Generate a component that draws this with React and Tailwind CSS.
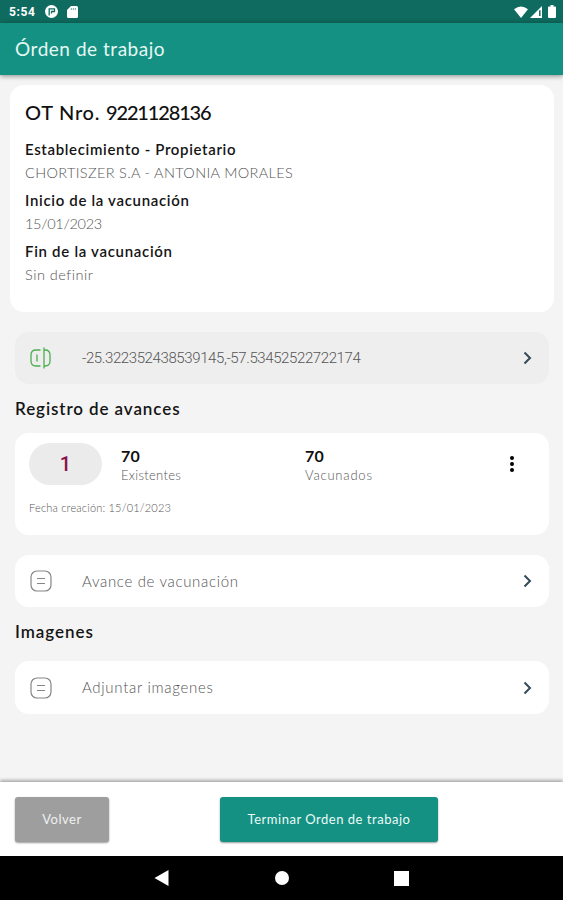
const details = [
  { label: 'Establecimiento - Propietario', value: 'CHORTISZER S.A - ANTONIA MORALES', labelCls: 'tracking-[0.65px]', valueCls: 'tracking-[0.34px]' },
  { label: 'Inicio de la vacunación', value: '15/01/2023', labelCls: 'tracking-[0.68px]', valueCls: 'tracking-[-0.3px]' },
  { label: 'Fin de la vacunación', value: 'Sin definir', labelCls: 'tracking-[0.7px]', valueCls: 'tracking-[0.5px]' },
]

function StatusBar() {
  return (
    <div className="flex h-[23px] shrink-0 items-center bg-[#0f6b5f] pl-[9px] pr-[7px] text-white">
      <span className="w-9 font-[Roboto] text-[12px] font-bold leading-none tracking-[0.6px]">5:54</span>
      <svg className="h-[13px] w-[13px]" viewBox="0 0 13 13">
        <circle cx="6.5" cy="6.5" r="6.5" fill="currentColor" />
        <path d="M4.200 10.500V3.800h5.300v2.700H6.500v2" fill="none" stroke="#0f6b5f" strokeWidth="1.300" />
      </svg>
      <svg className="ml-[9px] h-3 w-[11px]" viewBox="0 0 11 12">
        <path d="M4 0h5.5Q11 0 11 1.5v9Q11 12 9.500 12h-8Q0 12 0 10.500V4z" fill="currentColor" />
        <path d="M4.300 2v2M6.300 2v2M8.300 2v2" stroke="#0f6b5f" strokeWidth="0.600" />
      </svg>
      <div className="flex-1" />
      <svg className="h-3 w-[14px]" viewBox="0 0 14 12">
        <path d="M0 3.300Q7-2.500 14 3.300L7 12z" fill="currentColor" />
      </svg>
      <svg className="ml-[2px] h-3 w-3" viewBox="0 0 12 12">
        <path d="M0 12L12 0v12z" fill="currentColor" />
        <path d="M9.800 4.300V10" stroke="#0f6b5f" strokeWidth="1.500" />
      </svg>
      <svg className="ml-[6px] h-[13px] w-[8px]" viewBox="0 0 8 13">
        <path d="M2.500 0h3v1.500H7q1 0 1 1V12q0 1-1 1H1q-1 0-1-1V2.500q0-1 1-1h1.500z" fill="currentColor" />
      </svg>
    </div>
  )
}

function Chevron() {
  return (
    <svg className="h-[14px] w-[9px]" viewBox="0 0 9 14">
      <path d="M1.500 1.500L7 7l-5.500 5.500" fill="none" stroke="#344b57" strokeWidth="2" />
    </svg>
  )
}

function NoteIcon() {
  return (
    <svg className="h-[22px] w-[22px]" viewBox="0 0 22 22" fill="none" stroke="#858585" strokeWidth="1.200" strokeLinecap="round">
      <rect x="1" y="1" width="20" height="20" rx="6" />
      <path d="M7.500 8.500h7M7.500 13.500h7" />
    </svg>
  )
}

function LocationIcon() {
  return (
    <svg className="h-[22px] w-[22px]" viewBox="0 0 22 22" fill="none" stroke="#4caf50" strokeWidth="1.300" strokeLinecap="round">
      <path d="M10 3H6Q1 3 1 8v6q0 5 5 5h4M14 1v20M14 3h1q5 0 5 5v6q0 5-5 5h-1M7 8v6" />
    </svg>
  )
}

function ActionRow({ icon, className, textCls, children }) {
  return (
    <div className={`flex w-[534px] shrink-0 items-center rounded-[14px] pl-[15px] pr-[17px] ${className}`}>
      {icon}
      <span className={`ml-[30px] flex-1 text-[15px] text-[#555] ${textCls}`}>{children}</span>
      <Chevron />
    </div>
  )
}

function Count({ value, label, className, labelCls }) {
  return (
    <div className={className}>
      <div className="pt-[2px] text-[16px] font-bold leading-[20px] tracking-[0.3px] text-[#111]">{value}</div>
      <div className={`text-[13px] font-light leading-[18px] text-[#555] ${labelCls}`}>{label}</div>
    </div>
  )
}

export default function App() {
  return (
    <div className="flex h-[900px] w-[563px] flex-col overflow-hidden bg-[#f4f4f4] font-['Lato','Open_Sans',sans-serif]">
      <StatusBar />
      <header className="z-10 flex h-[52px] shrink-0 items-center bg-[#149182] pl-[15px] text-[19px] tracking-[0.53px] text-[#e6f7f4] shadow-[0_1px_5px_rgba(0,0,0,0.45)]">
        Órden de trabajo
      </header>

      <main className="flex min-h-0 flex-1 flex-col px-[15px] pt-[10px]">
        <section className="-ml-[5px] -mr-[5px] h-[227px] w-[544px] shrink-0 rounded-[14px] bg-white px-[15px] pt-[14px]">
          <h1 className="mb-[12px] text-[20px] font-medium leading-[26px] tracking-[0.75px] text-[#111]">
            OT Nro. <span className="tracking-[-1.15px]">9221128136</span>
          </h1>
          <div className="flex flex-col gap-[4px]">
            {details.map(d => (
              <div key={d.label}>
                <div className={`w-fit text-[15px] font-semibold leading-[24px] text-[#151515] ${d.labelCls}`}>{d.label}</div>
                <div className={`w-fit text-[14.5px] font-light leading-[23px] text-[#555] ${d.valueCls}`}>{d.value}</div>
              </div>
            ))}
          </div>
        </section>

        <ActionRow icon={<LocationIcon />} className="mt-[20px] h-[52px] bg-[#eeeeee]" textCls="font-[Roboto] font-light tracking-[-0.39px]">
          -25.322352438539145,-57.53452522722174
        </ActionRow>

        <h2 className="mt-[12px] text-[17px] font-semibold leading-[25px] tracking-[0.9px] text-[#151515]">Registro de avances</h2>

        <section className="mt-[12px] h-[102px] w-[534px] shrink-0 rounded-[14px] bg-white px-[14px] pt-[10px]">
          <div className="flex h-[42px] items-center">
            <div className="flex h-[42px] w-[73px] items-center justify-center rounded-full bg-[#ebebeb] font-[Roboto] text-[20px] font-medium text-[#8b1048]">1</div>
            <Count value="70" label="Existentes" className="ml-[19px] w-[184px]" labelCls="tracking-[0.3px]" />
            <Count value="70" label="Vacunados" className="flex-1" labelCls="tracking-[0.8px]" />
            <div className="mr-[21px] flex flex-col gap-[2px]">
              <span className="h-[4px] w-[4px] rounded-full bg-black" />
              <span className="h-[4px] w-[4px] rounded-full bg-black" />
              <span className="h-[4px] w-[4px] rounded-full bg-black" />
            </div>
          </div>
          <div className="mt-[15px] text-[11px] font-light leading-[16px] tracking-[0.2px] text-[#555]">Fecha creación: 15/01/2023</div>
        </section>

        <ActionRow icon={<NoteIcon />} className="mt-[20px] h-[52px] bg-white" textCls="font-light tracking-[0.67px]">Avance de vacunación</ActionRow>

        <h2 className="mt-[12px] text-[17px] font-semibold leading-[25px] tracking-[0.95px] text-[#151515]">Imagenes</h2>

        <ActionRow icon={<NoteIcon />} className="mt-[17px] h-[53px] bg-white" textCls="font-light tracking-[0.7px]">Adjuntar imagenes</ActionRow>
      </main>

      <footer className="z-10 flex h-[74px] shrink-0 items-start bg-white pl-[15px] pt-[15px] shadow-[0_-2px_3px_rgba(0,0,0,0.3)]">
        <button className="h-[45px] w-[94px] rounded-[3px] bg-[#9e9e9e] text-[13px] tracking-[0.5px] text-[#f0f0f0] shadow-[0_1px_2px_rgba(0,0,0,0.4)]">Volver</button>
        <button className="ml-[111px] h-[45px] w-[218px] rounded-[3px] bg-[#149182] text-[13px] tracking-[0.52px] text-[#ecfaf8] shadow-[0_1px_2px_rgba(0,0,0,0.4)]">
          Terminar Orden de trabajo
        </button>
      </footer>

      <nav className="z-10 flex h-[44px] shrink-0 items-center bg-black pl-[154px]">
        <svg className="h-4 w-[15px]" viewBox="0 0 15 16"><path d="M0.500 8L14.500 0v16z" fill="#fff" /></svg>
        <span className="ml-[106px] h-[14px] w-[14px] rounded-full bg-white" />
        <span className="ml-[105px] h-[15px] w-[15px] bg-white" />
      </nav>
    </div>
  )
}
